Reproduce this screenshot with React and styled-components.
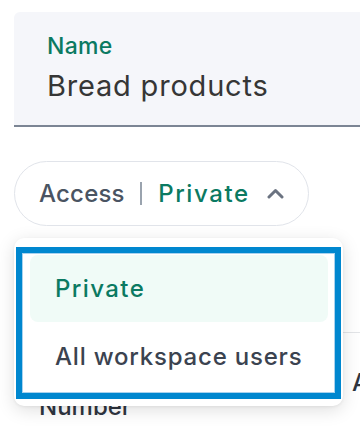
import React from "react";
import styled, { createGlobalStyle } from "styled-components";

const Global = createGlobalStyle`
  html, body { margin: 0; padding: 0; background: #ffffff; }
  body { font-family: Inter, Lato, sans-serif; }
  * { box-sizing: border-box; }
`;

const Page = styled.div`
  width: 360px;
  height: 436px;
  overflow: hidden;
  padding: 12px 0 0 14px;
  position: relative;
`;

const Field = styled.div`
  width: 360px;
  height: 115px;
  background: #f5f6fa;
  border-radius: 6px 6px 0 0;
  border-bottom: 2px solid #7c8594;
  padding: 22px 0 0 33px;
  display: flex;
  flex-direction: column;
`;

const FieldLabel = styled.div`
  font-size: 23px;
  font-weight: 500;
  color: #0b7a62;
  letter-spacing: 0.3px;
  line-height: 24px;
`;

const FieldValue = styled.div`
  margin-top: 12px;
  font-size: 29px;
  font-weight: 400;
  color: #363636;
  letter-spacing: 0.8px;
  line-height: 32px;
`;

const FilterWrap = styled.div`
  position: relative;
  margin-top: 34px;
  width: fit-content;
`;

const Pill = styled.div`
  height: 65px;
  width: 295px;
  border: 1.5px solid #e1e4ea;
  border-radius: 33px;
  display: flex;
  align-items: center;
  padding: 0 0 0 24px;
  font-size: 24px;
  font-weight: 500;
`;

const PillKey = styled.span`
  color: #4a5462;
  letter-spacing: 0.2px;
`;

const Divider = styled.span`
  width: 2.5px;
  height: 23px;
  background: #9aa3ae;
  margin: 0 16px 0 15px;
`;

const PillValue = styled.span`
  color: #0b7a62;
  letter-spacing: 1.6px;
`;

const Chevron = styled.svg`
  margin-left: 17px;
  width: 17px;
  height: 11px;
  flex: none;
`;

const Menu = styled.div`
  position: absolute;
  z-index: 2;
  top: calc(100% + 12px);
  left: 0;
  width: 329px;
  height: 168px;
  background: #ffffff;
  border-radius: 10px;
  box-shadow: 0 4px 18px rgba(0, 0, 0, 0.13), 0 1px 3px rgba(0, 0, 0, 0.06);
  padding: 9px 2px 7px 2px;
`;

const Listbox = styled.ul`
  list-style: none;
  margin: 0;
  height: 100%;
  border: 6px solid #0087cf;
  box-shadow: inset 0 0 0 1px #a8d2ee;
  padding: 2px 7px 0 8px;
  display: flex;
  flex-direction: column;
`;

const Option = styled.li`
  height: ${(p) => (p.$first ? "67px" : "69px")};
  display: flex;
  align-items: center;
  padding-left: 25px;
  border-radius: 8px;
  font-size: 24px;
  font-weight: 500;
  letter-spacing: ${(p) => (p.$selected ? "1.4px" : "0.8px")};
  background: ${(p) => (p.$selected ? "#f0fbf7" : "transparent")};
  color: ${(p) => (p.$selected ? "#0b7a62" : "#3b4350")};
`;

const Table = styled.div`
  margin-top: 106px;
  border-top: 1px solid #e3e5e8;
`;

const Row = styled.div`
  display: grid;
  grid-template-columns: 313px auto;
  padding: 35px 0 0 25px;
  font-size: 24px;
  font-weight: 500;
  color: #2f3540;
  white-space: nowrap;
`;

const Cell = styled.div`
  padding-top: ${(p) => p.$offset || 0}px;
`;

export default function App() {
  return (
    <>
      <Global />
      <Page>
        <Field>
          <FieldLabel>Name</FieldLabel>
          <FieldValue>Bread products</FieldValue>
        </Field>
        <FilterWrap>
          <Pill>
            <PillKey>Access</PillKey>
            <Divider />
            <PillValue>Private</PillValue>
            <Chevron viewBox="0 0 17 11">
              <polyline
                points="2,9 8.5,2.5 15,9"
                fill="none"
                stroke="#6b7381"
                strokeWidth="3"
                strokeLinecap="round"
                strokeLinejoin="round"
              />
            </Chevron>
          </Pill>
          <Menu>
            <Listbox>
              <Option $selected $first>Private</Option>
              <Option>All workspace users</Option>
            </Listbox>
          </Menu>
        </FilterWrap>
        <Table>
          <Row>
            <Cell $offset={24}>Number</Cell>
            <Cell>A</Cell>
          </Row>
        </Table>
      </Page>
    </>
  );
}
